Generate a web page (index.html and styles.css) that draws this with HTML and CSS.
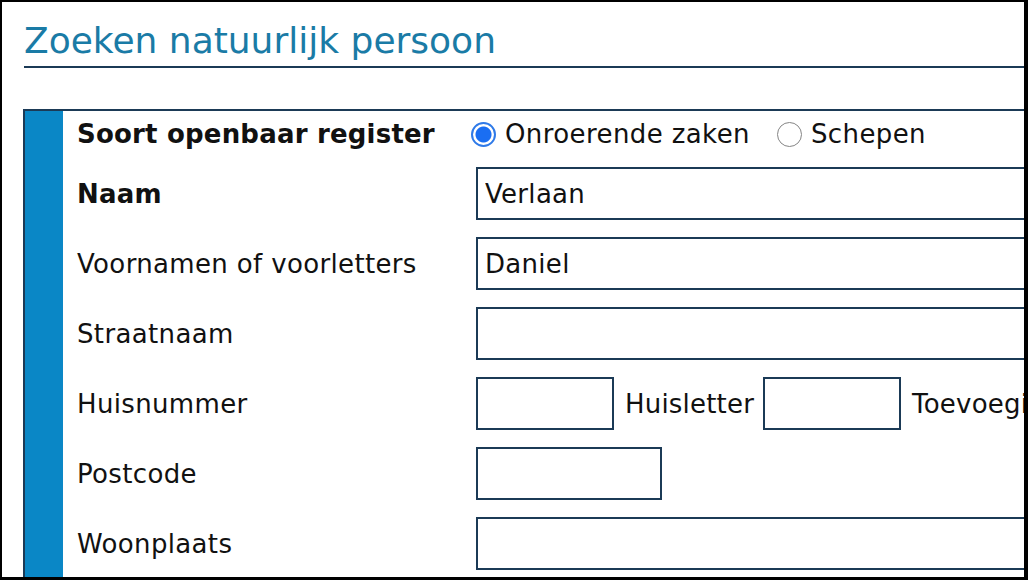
FILE: index.html
```html
<!DOCTYPE html>
<html lang="nl">
<head>
<meta charset="utf-8">
<title>Zoeken natuurlijk persoon</title>
<link rel="stylesheet" href="styles.css">
</head>
<body>
<div class="page">
  <h1 class="title">Zoeken natuurlijk persoon</h1>
  <form class="box">
    <div class="bar"></div>
    <div class="fields">
      <div class="row row-radio">
        <div class="label bold">Soort openbaar register</div>
        <div class="control radios">
          <label class="radio-opt"><input type="radio" name="reg" class="radio" checked><span>Onroerende zaken</span></label>
          <label class="radio-opt"><input type="radio" name="reg" class="radio"><span>Schepen</span></label>
        </div>
      </div>
      <div class="row">
        <div class="label bold">Naam</div>
        <div class="control"><input class="text wide" type="text" value="Verlaan"></div>
      </div>
      <div class="row">
        <div class="label">Voornamen of voorletters</div>
        <div class="control"><input class="text wide" type="text" value="Daniel"></div>
      </div>
      <div class="row">
        <div class="label">Straatnaam</div>
        <div class="control"><input class="text wide" type="text"></div>
      </div>
      <div class="row">
        <div class="label">Huisnummer</div>
        <div class="control inline">
          <input class="text small" type="text">
          <span class="inline-label">Huisletter</span>
          <input class="text small" type="text">
          <span class="inline-label">Toevoeging</span>
          <input class="text small" type="text">
        </div>
      </div>
      <div class="row">
        <div class="label">Postcode</div>
        <div class="control"><input class="text medium" type="text"></div>
      </div>
      <div class="row">
        <div class="label">Woonplaats</div>
        <div class="control"><input class="text wide" type="text"></div>
      </div>
    </div>
  </form>
</div>
</body>
</html>
```

FILE: styles.css
```css
html {
  background: #000;
  margin: 0;
  padding: 0;
}

body {
  margin: 2px 4px 3px 2px;
  background: #fff;
  height: 575px;
  overflow: hidden;
  font-family: "DejaVu Sans", Verdana, sans-serif;
  color: #111;
}

.page {
  padding-top: 18px;
  width: 1200px;
}

.title {
  margin: 0 0 0 22px;
  padding: 0 0 4px 0;
  font-size: 36px;
  line-height: 42px;
  font-weight: normal;
  color: #1a7ba6;
  border-bottom: 2px solid #1b3a56;
}

.box {
  display: flex;
  margin: 41px 0 0 21px;
  border-top: 2px solid #1b3a56;
  border-left: 2px solid #1b3a56;
}

.bar {
  width: 38px;
  flex: none;
  background: #0a87c6;
}

.fields {
  display: flex;
  flex-direction: column;
  gap: 17px;
  padding: 7px 0 40px 14px;
}

.row {
  display: flex;
  align-items: center;
  height: 53px;
}

.row-radio {
  height: 32px;
}

.label {
  width: 399px;
  flex: none;
  font-size: 26px;
  letter-spacing: 0.35px;
}

.bold {
  font-weight: bold;
  letter-spacing: 0.2px;
}

.control {
  display: flex;
  align-items: center;
  height: 100%;
}

.radios {
  margin-left: -5px;
  gap: 27px;
}

.radio-opt {
  display: flex;
  align-items: center;
  gap: 9px;
  font-size: 26px;
  letter-spacing: 0.4px;
}

.radio {
  appearance: none;
  -webkit-appearance: none;
  margin: 0;
  width: 25px;
  height: 25px;
  border-radius: 50%;
  border: 1.5px solid #858585;
  background: #fff;
  box-sizing: border-box;
}

.radio:checked {
  border: 2px solid #2f7ae8;
  background: radial-gradient(circle, #1a6ef2 0 7.5px, #fff 8.5px);
}

.text {
  box-sizing: border-box;
  height: 53px;
  margin: 0;
  border: 2px solid #1b3a56;
  border-radius: 0;
  padding: 0 7px;
  font-family: "DejaVu Sans", Verdana, sans-serif;
  font-size: 26px;
  letter-spacing: 0.3px;
  color: #111;
  background: #fff;
  outline: none;
}

.wide {
  width: 620px;
}

.small {
  width: 138px;
}

.medium {
  width: 186px;
}

.inline-label {
  font-size: 26px;
  letter-spacing: 0.2px;
  margin: 0 9px 0 11px;
}
```
